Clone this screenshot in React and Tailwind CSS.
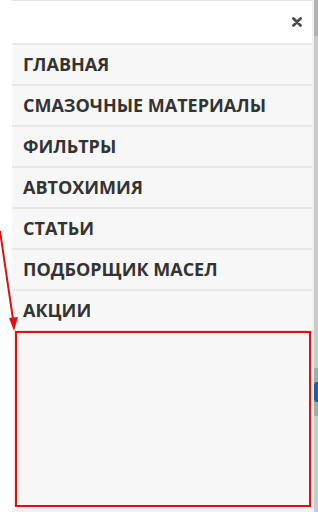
export default function App() {
  const items = [
    "ГЛАВНАЯ",
    "СМАЗОЧНЫЕ МАТЕРИАЛЫ",
    "ФИЛЬТРЫ",
    "АВТОХИМИЯ",
    "СТАТЬИ",
    "ПОДБОРЩИК МАСЕЛ",
    "АКЦИИ",
  ];
  return (
    <div
      className="relative flex h-[512px] w-[318px] overflow-hidden bg-white"
      style={{ fontFamily: '"Open Sans", "Noto Sans", sans-serif' }}
    >
      <div className="w-[12px] shrink-0 bg-white" />
      <div className="flex w-[300px] shrink-0 flex-col">
        <div className="flex h-[43px] items-center justify-end border-t border-[#e4e4e4] bg-white pr-[10px]">
          <svg width="10" height="10" viewBox="0 0 10 10">
            <path d="M1.5 1.5 L8.5 8.5 M8.5 1.5 L1.5 8.5" stroke="#4a4a4a" strokeWidth="2.8" strokeLinecap="round" />
          </svg>
        </div>
        <div className="flex flex-1 flex-col bg-[#f7f7f7]">
          {items.map((t) => (
            <div
              key={t}
              className="flex h-[41px] items-center border-t-2 border-[#e8e8e8] pl-[11px] text-[18px] font-bold text-[#333]"
            >
              {t}
            </div>
          ))}
          <div className="ml-[3px] mr-[1px] mt-[1px] h-[176px] border-[2px] border-[#e01010] shadow-[0_0_1px_#ff6060]" />
          <div className="flex-1 bg-[#f4f0f8]" />
        </div>
      </div>
      <div className="flex w-[2px] shrink-0 bg-[#f0f0f0]" />
      <div className="flex w-[4px] shrink-0 flex-col bg-[#c9c9c9]">
        <div className="h-[36px] bg-[#b0b0b0]" />
        <div className="h-[332px]" />
        <div className="flex h-[48px] flex-col justify-center bg-[#a8a8a8]">
          <div className="h-[20px] rounded-l-[3px] bg-[#1f5fa0]" />
        </div>
      </div>
      <svg
        className="pointer-events-none absolute left-0 top-0"
        width="30"
        height="340"
        viewBox="0 0 30 340"
      >
        <line x1="0" y1="231" x2="14" y2="326" stroke="#e01010" strokeWidth="2" />
        <polygon points="14,331 9,318 18,317" fill="#e01010" />
      </svg>
    </div>
  );
}
